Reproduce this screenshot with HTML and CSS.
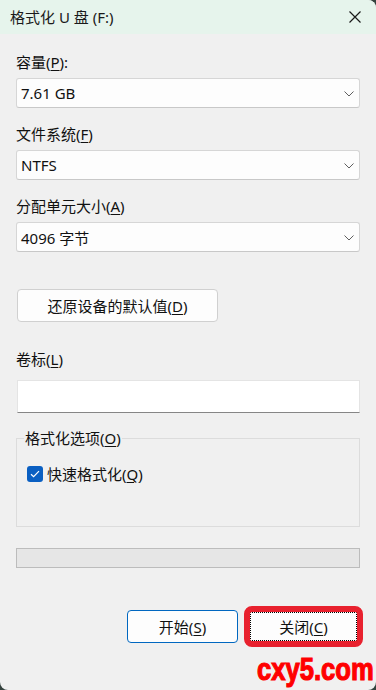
FILE: index.html
```html
<!DOCTYPE html>
<html lang="zh-CN">
<head>
  <meta charset="UTF-8" />
  <meta name="viewport" content="width=device-width, initial-scale=1.0" />
  <title>格式化 U 盘 (F:)</title>
  <link rel="stylesheet" href="styles.css">
</head>
<body>
  <div class="window">
    <header class="titlebar">
      <span class="title">格式化 U 盘 (F:)</span>
      <svg class="close-icon" width="12" height="12" viewBox="0 0 12 12">
        <path d="M0.5 0.5 L11.5 11.5 M11.5 0.5 L0.5 11.5" stroke="#1a1a1a" stroke-width="1.2" fill="none" />
      </svg>
    </header>

    <main class="content">
      <div class="field">
        <div class="field-label">容量(<u>P</u>):</div>
        <div class="select">
          <span>7.61 GB</span>
          <svg class="chevron" width="10" height="6" viewBox="0 0 10 6"><path d="M0.5 0.5 L5 5 L9.5 0.5" stroke="#5f5f5f" stroke-width="1" fill="none" /></svg>
        </div>
      </div>
      <div class="field">
        <div class="field-label">文件系统(<u>F</u>)</div>
        <div class="select">
          <span>NTFS</span>
          <svg class="chevron" width="10" height="6" viewBox="0 0 10 6"><path d="M0.5 0.5 L5 5 L9.5 0.5" stroke="#5f5f5f" stroke-width="1" fill="none" /></svg>
        </div>
      </div>
      <div class="field">
        <div class="field-label">分配单元大小(<u>A</u>)</div>
        <div class="select">
          <span>4096 字节</span>
          <svg class="chevron" width="10" height="6" viewBox="0 0 10 6"><path d="M0.5 0.5 L5 5 L9.5 0.5" stroke="#5f5f5f" stroke-width="1" fill="none" /></svg>
        </div>
      </div>

      <button class="btn btn-restore">还原设备的默认值(<u>D</u>)</button>

      <div class="field field-volume">
        <div class="field-label">卷标(<u>L</u>)</div>
        <div class="text-input"></div>
      </div>

      <fieldset class="options">
        <legend>格式化选项(<u>O</u>)</legend>
        <label class="check">
          <span class="checkbox">
            <svg width="10" height="8" viewBox="0 0 10 8"><path d="M1 4.2 L3.6 6.6 L9 1.2" stroke="#fff" stroke-width="1.2" fill="none" /></svg>
          </span>
          <span>快速格式化(<u>Q</u>)</span>
        </label>
      </fieldset>

      <div class="progress"></div>

      <div class="actions">
        <button class="btn btn-primary">开始(<u>S</u>)</button>
        <button class="btn btn-close"><span class="focus-ring">关闭(<u>C</u>)</span></button>
      </div>
    </main>

    <div class="watermark">cxy5.com</div>
  </div>
</body>
</html>
```

FILE: styles.css
```css
html {
  background: #34423e;
}
body {
  margin: 0;
  font-family: "Noto Sans", "Noto Sans CJK SC", sans-serif;
  font-size: 15px;
  color: #111;
}
.window {
  position: relative;
  height: 690px;
  background: #f0f0f0;
  border-radius: 0 8px 8px 8px;
  overflow: hidden;
}
.titlebar {
  height: 34px;
  background: #e6f4ec;
  display: flex;
  align-items: center;
  justify-content: space-between;
  padding: 0 15px 0 10px;
}
.title {
  font-size: 15px;
  line-height: 20px;
  color: #1a1a1a;
}
.close-icon {
  display: block;
}
.content {
  padding: 18px 16px 0 16px;
}
u {
  text-decoration-thickness: 1px;
  text-underline-offset: 2px;
}
.field {
  margin-bottom: 16px;
}
.field-label {
  line-height: 20px;
  margin-bottom: 6px;
}
.select {
  height: 30px;
  box-sizing: border-box;
  background: #fdfdfd;
  border: 1px solid #d6d6d6;
  border-bottom-color: #c8c8c8;
  border-radius: 3px;
  display: flex;
  align-items: center;
  justify-content: space-between;
  padding: 0 5px 0 4px;
}
.chevron {
  display: block;
  margin-top: 1px;
}
.btn {
  font-family: inherit;
  font-size: 15px;
  color: #111;
  background: #fdfdfd;
  border: 1px solid #d0d0d0;
  border-radius: 4px;
  height: 33px;
  padding: 0;
  line-height: 20px;
}
.btn-restore {
  display: block;
  width: 201px;
  margin: 37px 0 0 1px;
}
.field-volume {
  margin-top: 27px;
  margin-bottom: 0;
}
.field-volume .field-label {
  margin-bottom: 11px;
}
.text-input {
  height: 33px;
  box-sizing: border-box;
  margin-left: 1px;
  background: #fff;
  border: 1px solid #e4e4e4;
  border-bottom: 1px solid #868686;
}
.options {
  margin: 15px 0 0;
  padding: 16px 10px 42px 10px;
  border: 1px solid #dcdcdc;
}
.options legend {
  padding: 0 1px;
  margin-left: -3px;
  line-height: 20px;
}
.check {
  display: flex;
  align-items: center;
  gap: 4px;
  line-height: 20px;
}
.checkbox {
  width: 16px;
  height: 16px;
  border-radius: 3px;
  background: #0a5fc2;
  display: flex;
  align-items: center;
  justify-content: center;
}
.checkbox svg {
  display: block;
}
.progress {
  margin-top: 21px;
  height: 20px;
  box-sizing: border-box;
  background: #e6e6e6;
  border: 1px solid #bcbcbc;
}
.actions {
  margin-top: 42px;
  display: flex;
  justify-content: flex-end;
  gap: 10px;
  padding-right: 1px;
}
.actions .btn {
  width: 111px;
}
.btn-primary {
  border-color: #0067c0;
}
.btn-close {
  padding: 1px;
  outline: 6px solid #e8212e;
  outline-offset: -2px;
}
.focus-ring {
  display: flex;
  align-items: center;
  justify-content: center;
  height: 100%;
  box-sizing: border-box;
  border: 1px dotted #000;
}
.watermark {
  position: absolute;
  left: 257px;
  top: 651px;
  font-family: "Liberation Sans", sans-serif;
  font-weight: bold;
  font-size: 32px;
  line-height: 36px;
  color: #ff0000;
  -webkit-text-stroke: 1.2px #ff0000;
  transform: scaleX(0.8);
  transform-origin: left center;
}
```
